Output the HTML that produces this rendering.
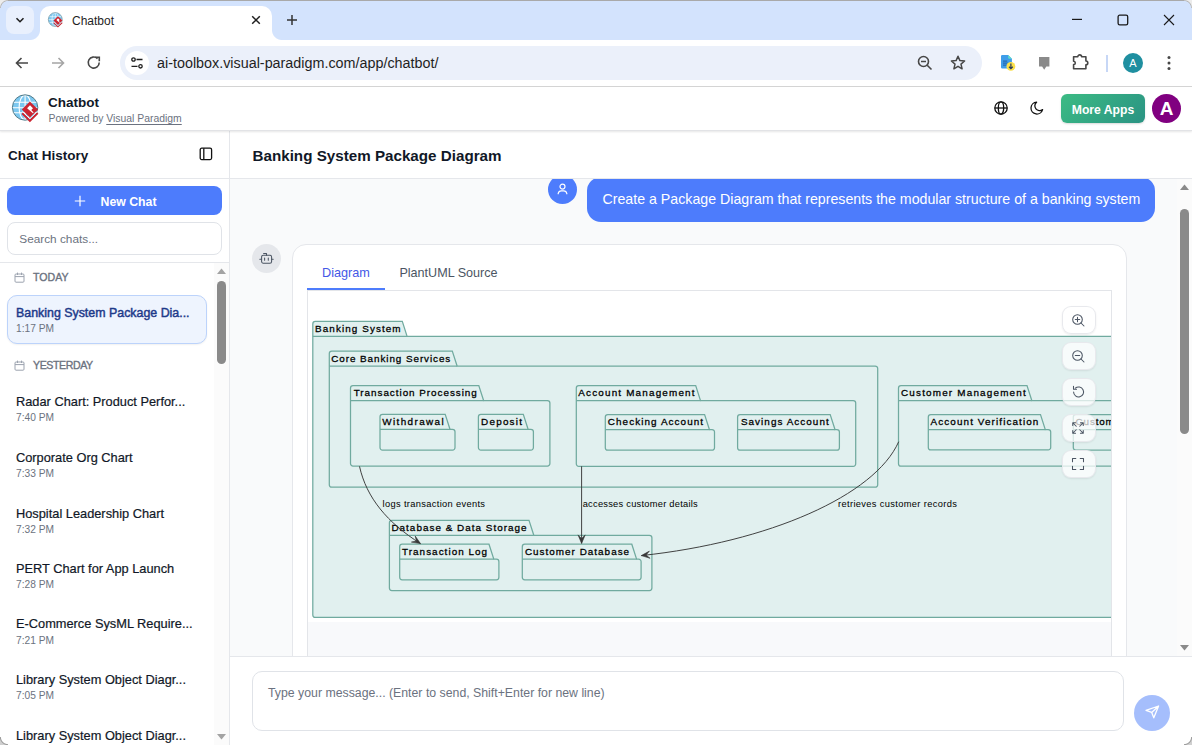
<!DOCTYPE html>
<html><head><meta charset="utf-8">
<style>
*{box-sizing:border-box;margin:0;padding:0}
html,body{width:1192px;height:745px;overflow:hidden;background:#fff;font-family:"Liberation Sans",sans-serif;position:relative}
.a{position:absolute}
svg{display:block}
/* chrome */
#strip{left:0;top:0;width:1192px;height:40px;background:#d3e3fd;border-top:1px solid #a9a9a9}
#tab{left:40px;top:6px;width:232px;height:34px;background:#fff;border-radius:10px 10px 0 0}
#toolbar{left:0;top:40px;width:1192px;height:47px;background:#fff;border-bottom:1px solid #d5d5d5}
#omni{left:120px;top:46px;width:862px;height:34px;border-radius:17px;background:#ebf0fa}
#siteinfo{left:125px;top:51px;width:24px;height:24px;border-radius:12px;background:#fff}
.ttext{color:#1f1f1f;font-size:12px}
/* app */
#apphdr{left:0;top:87px;width:1192px;height:44px;background:#fff;border-bottom:1px solid #e2e3e6;box-shadow:0 1px 2px rgba(0,0,0,.10);z-index:2}
#sidebar{left:0;top:130px;width:230px;height:615px;background:#fff;border-right:1px solid #e5e7eb}
#main{left:230px;top:130px;width:962px;height:615px;background:#fff}
</style></head>
<body>
<!-- ============ CHROME ============ -->
<div id="strip" class="a"></div>
<div class="a" style="left:6px;top:6px;width:28px;height:28px;border-radius:8px;background:#e9f0fd"></div>
<svg class="a" style="left:14px;top:14px" width="12" height="12" viewBox="0 0 12 12"><path d="M2.5 4.2 L6 7.7 L9.5 4.2" fill="none" stroke="#1f1f1f" stroke-width="1.6"/></svg>
<div id="tab" class="a"></div>
<div class="a" style="left:30px;top:30px;width:10px;height:10px;background:radial-gradient(circle at 0 0,transparent 9.5px,#fff 10.5px)"></div>
<div class="a" style="left:272px;top:30px;width:10px;height:10px;background:radial-gradient(circle at 100% 0,transparent 9.5px,#fff 10.5px)"></div>
<!-- favicon -->
<svg class="a" style="left:46.7px;top:11px" width="17.6" height="17.6" viewBox="10 92 32 32">
<defs><clipPath id="gc2"><circle cx="25.1" cy="107.5" r="12.4"/></clipPath></defs>
<circle cx="25.1" cy="107.5" r="12.4" fill="#7cc8f0"/>
<g clip-path="url(#gc2)" stroke="#fff" stroke-width="1.1" fill="none">
<ellipse cx="25.1" cy="107.5" rx="6" ry="12.4"/><path d="M25.1 95V120M12 102.3H38M12 107.7H38M12 112.8H38"/>
</g>
<circle cx="25.1" cy="107.5" r="12.7" fill="none" stroke="#4b7888" stroke-width="1"/>
<path d="M29.9 101.4L38.1 109.5L29.9 117.6L21.8 109.5Z" fill="#cc2531"/>
<path d="M30 105.2L33 108.3L31.3 110L33.6 112.5L32.9 113.2L27.1 108.2Z" fill="#fff"/>
<path d="M22.2 113.2L29.9 120.8L37.7 113" fill="none" stroke="#cc2531" stroke-width="2"/>
<path d="M22.3 111.4L29.9 118.8L37.7 111.2" fill="none" stroke="#fff" stroke-width=".9"/>
</svg>
<div class="a ttext" style="left:72px;top:13.6px">Chatbot</div>
<svg class="a" style="left:250px;top:14px" width="12" height="12" viewBox="0 0 12 12"><path d="M2.2 2.2L9.8 9.8M9.8 2.2L2.2 9.8" stroke="#1f1f1f" stroke-width="1.5"/></svg>
<svg class="a" style="left:285px;top:13px" width="14" height="14" viewBox="0 0 14 14"><path d="M7 2V12M2 7H12" stroke="#333" stroke-width="1.5"/></svg>
<svg class="a" style="left:1070px;top:13px" width="14" height="14" viewBox="0 0 14 14"><path d="M2 6.4H12" stroke="#1a1a1a" stroke-width="1.2"/></svg>
<svg class="a" style="left:1116px;top:13px" width="14" height="14" viewBox="0 0 14 14"><rect x="2.1" y="2.2" width="9.6" height="9.6" rx="1.6" fill="none" stroke="#1a1a1a" stroke-width="1.3"/></svg>
<svg class="a" style="left:1162px;top:13px" width="14" height="14" viewBox="0 0 14 14"><path d="M2 2L12 12M12 2L2 12" stroke="#1a1a1a" stroke-width="1.1"/></svg>

<div id="toolbar" class="a"></div>
<svg class="a" style="left:13px;top:54px" width="18" height="18" viewBox="0 0 18 18"><path d="M15 9H3.5M8.5 4L3.5 9L8.5 14" fill="none" stroke="#474747" stroke-width="1.6"/></svg>
<svg class="a" style="left:49px;top:54px" width="18" height="18" viewBox="0 0 18 18"><path d="M3 9H14.5M9.5 4L14.5 9L9.5 14" fill="none" stroke="#a5a5a5" stroke-width="1.6"/></svg>
<svg class="a" style="left:85px;top:54px" width="18" height="18" viewBox="0 0 18 18"><path d="M14.2 8.5A5.5 5.5 0 1 1 12.5 4.6" fill="none" stroke="#474747" stroke-width="1.6"/><path d="M10.2 3.2H14.3V7.3" fill="none" stroke="#474747" stroke-width="1.6"/></svg>
<div id="omni" class="a"></div>
<div id="siteinfo" class="a"></div>
<svg class="a" style="left:130px;top:56px" width="14" height="14" viewBox="0 0 14 14"><circle cx="3.5" cy="3.5" r="1.7" fill="none" stroke="#1f1f1f" stroke-width="1.3"/><path d="M6.5 3.5H12.5M1.5 10.3H7.5" stroke="#1f1f1f" stroke-width="1.3"/><circle cx="10.5" cy="10.3" r="1.7" fill="none" stroke="#1f1f1f" stroke-width="1.3"/></svg>
<div class="a" style="left:157px;top:55px;font-size:14.35px;color:#1f1f1f">ai-toolbox.visual-paradigm.com/app/chatbot/</div>
<svg class="a" style="left:916px;top:54px" width="18" height="18" viewBox="0 0 18 18"><circle cx="7.5" cy="7.5" r="5" fill="none" stroke="#474747" stroke-width="1.6"/><path d="M5 7.5H10M11.2 11.2L15.5 15.5" stroke="#474747" stroke-width="1.6"/></svg>
<svg class="a" style="left:949px;top:54px" width="18" height="18" viewBox="0 0 18 18"><path d="M9 2.2L10.9 6.6L15.6 7L12 10.1L13.1 14.8L9 12.3L4.9 14.8L6 10.1L2.4 7L7.1 6.6Z" fill="none" stroke="#474747" stroke-width="1.5" stroke-linejoin="round"/></svg>
<!-- extension icons -->
<svg class="a" style="left:996px;top:52px" width="20" height="20" viewBox="996 52 20 20"><path d="M1002.3 55H1008.2L1011.9 58.7V67.3A1.3 1.3 0 0 1 1010.6 68.6H1002.3A1.3 1.3 0 0 1 1001 67.3V56.3A1.3 1.3 0 0 1 1002.3 55Z" fill="#3f9de9"/><path d="M1008.2 55L1011.9 58.7H1009.2A1 1 0 0 1 1008.2 57.7Z" fill="#5fe0c8"/><path d="M1003 61.1H1007.2M1003 63.1H1007.8M1003 65.1H1006.6" stroke="#1f5fa6" stroke-width="1"/><circle cx="1010.9" cy="66.4" r="4.4" fill="#fbe04a"/><path d="M1010.9 63.6V68.4M1009 66.8L1010.9 68.6L1012.8 66.8" fill="none" stroke="#2a3a5a" stroke-width="1.2"/></svg>
<svg class="a" style="left:1034px;top:52px" width="20" height="20" viewBox="1034 52 20 20"><path d="M1039 57.1H1049.4V66.4H1046.3L1044.2 69.7L1042.1 66.4H1039Z" fill="#8a8a8a"/></svg>
<svg class="a" style="left:1070px;top:52px" width="20" height="20" viewBox="1070 52 20 20"><path d="M1073.6 56.8H1077.8A1.9 1.9 0 0 1 1081.6 56.8H1085.9V61A1.9 1.9 0 0 1 1085.9 64.8V68.8H1073.6V64.6A1.7 1.7 0 0 0 1073.6 61.2Z" fill="none" stroke="#474747" stroke-width="1.6" stroke-linejoin="round"/></svg>
<div class="a" style="left:1106px;top:55px;width:2px;height:17px;background:#c7d7f6"></div>
<div class="a" style="left:1123px;top:53px;width:20px;height:20px;border-radius:10px;background:#1f8fa0;color:#fff;font-size:11px;text-align:center;line-height:20px">A</div>
<svg class="a" style="left:1160px;top:54px" width="18" height="18" viewBox="0 0 18 18"><circle cx="9" cy="3.5" r="1.5" fill="#474747"/><circle cx="9" cy="9" r="1.5" fill="#474747"/><circle cx="9" cy="14.5" r="1.5" fill="#474747"/></svg>

<!-- ============ APP HEADER ============ -->
<div id="apphdr" class="a"></div>
<svg class="a" style="left:10px;top:92px;z-index:3" width="32" height="32" viewBox="10 92 32 32">
<defs><clipPath id="gc"><circle cx="25.1" cy="107.5" r="12.4"/></clipPath></defs>
<circle cx="25.1" cy="107.5" r="12.4" fill="#7cc8f0"/>
<g clip-path="url(#gc)" stroke="#fff" stroke-width="1.1" fill="none">
<ellipse cx="25.1" cy="107.5" rx="6" ry="12.4"/><path d="M25.1 95V120M12 102.3H38M12 107.7H38M12 112.8H38"/>
</g>
<circle cx="25.1" cy="107.5" r="12.7" fill="none" stroke="#4b7888" stroke-width="1"/>
<path d="M29.9 101.4L38.1 109.5L29.9 117.6L21.8 109.5Z" fill="#cc2531"/>
<path d="M30 105.2L33 108.3L31.3 110L33.6 112.5L32.9 113.2L27.1 108.2Z" fill="#fff"/>
<path d="M22.2 113.2L29.9 120.8L37.7 113" fill="none" stroke="#cc2531" stroke-width="2"/>
<path d="M22.3 111.4L29.9 118.8L37.7 111.2" fill="none" stroke="#fff" stroke-width=".9"/>
</svg>
<div class="a" style="left:48px;top:96.2px;font-size:13.5px;line-height:13.5px;font-weight:700;color:#111827;z-index:3">Chatbot</div>
<div class="a" style="left:48.5px;top:114.3px;font-size:10.4px;line-height:10.4px;color:#6b7280;z-index:3">Powered by <span style="text-decoration:underline;text-underline-offset:1.5px">Visual Paradigm</span></div>
<svg class="a" style="left:992px;top:99px;z-index:3" width="18" height="18" viewBox="0 0 18 18"><g fill="none" stroke="#111" stroke-width="1.3"><circle cx="9" cy="9" r="6.2"/><ellipse cx="9" cy="9" rx="2.7" ry="6.2"/><path d="M2.8 9H15.2"/></g></svg>
<svg class="a" style="left:1028px;top:99px;z-index:3" width="18" height="18" viewBox="0 0 18 18"><path d="M8.6 3.2A5.9 5.9 0 1 0 14.6 10.6A4.6 4.6 0 0 1 8.6 3.2Z" fill="none" stroke="#111" stroke-width="1.3" stroke-linejoin="round"/></svg>
<div class="a" style="left:1061px;top:94px;width:84px;height:29px;border-radius:6px;background:linear-gradient(135deg,#3cbb84,#2a9383);box-shadow:0 1px 2px rgba(0,0,0,.15);z-index:3;color:#fff;font-weight:700;font-size:12.2px;line-height:29px;padding-top:2px;text-align:center">More Apps</div>
<div class="a" style="left:1152px;top:94px;width:29px;height:29px;border-radius:15px;background:#800080;z-index:3;color:#fff;font-weight:700;font-size:19px;line-height:30px;text-align:center">A</div>

<!-- ============ SIDEBAR ============ -->
<div id="sidebar" class="a"></div>
<div class="a" style="left:8px;top:148.5px;font-size:13.5px;line-height:13.5px;font-weight:700;color:#111827">Chat History</div>
<svg class="a" style="left:199px;top:146px" width="14" height="16" viewBox="0 0 14 16"><rect x="1.2" y="2.2" width="11.4" height="11.4" rx="1.5" fill="none" stroke="#111" stroke-width="1.3"/><path d="M4.8 2.2V13.6" stroke="#111" stroke-width="1.3"/></svg>
<div class="a" style="left:0;top:178px;width:229px;height:1px;background:#e5e7eb"></div>
<div class="a" style="left:7px;top:186px;width:215px;height:29px;border-radius:8px;background:#4d7cfc"></div>
<svg class="a" style="left:74px;top:195px" width="12" height="12" viewBox="0 0 12 12"><path d="M6 .8V11.2M.8 6H11.2" stroke="#fff" stroke-width="1.2"/></svg>
<div class="a" style="left:100.5px;top:195.5px;font-size:12.3px;line-height:12.3px;font-weight:700;color:#fff">New Chat</div>
<div class="a" style="left:7px;top:222px;width:215px;height:33px;border-radius:8px;border:1px solid #e0e3e8;background:#fff"></div>
<div class="a" style="left:19.3px;top:233.5px;font-size:11.8px;line-height:11.8px;color:#6b7280">Search chats...</div>
<div class="a" style="left:0;top:262px;width:229px;height:1px;background:#e5e7eb"></div>
<!-- list -->
<div class="a" style="left:214px;top:263px;width:15px;height:482px;background:#fbfbfb"></div>
<svg class="a" style="left:216px;top:267px" width="11" height="8" viewBox="0 0 11 8"><path d="M1 7H10L5.5 1.5Z" fill="#a3a3a3"/></svg>
<div class="a" style="left:217px;top:281px;width:9px;height:83px;border-radius:4.5px;background:#8a8a8a"></div>
<svg class="a" style="left:216px;top:733px" width="11" height="8" viewBox="0 0 11 8"><path d="M1 1H10L5.5 6.5Z" fill="#a3a3a3"/></svg>

<svg class="a" style="left:14px;top:272px" width="11" height="11" viewBox="0 0 11 11"><rect x="1" y="2" width="9" height="8.2" rx="1" fill="none" stroke="#9ca3af" stroke-width="1"/><path d="M1 4.6H10M3.5 .6V3M7.5 .6V3" stroke="#9ca3af" stroke-width="1"/></svg>
<div class="a" style="left:33px;top:272.1px;font-size:10.6px;line-height:10.6px;color:#6b7280;-webkit-text-stroke:.35px #6b7280">TODAY</div>
<div class="a" style="left:7px;top:295px;width:200px;height:49px;border-radius:10px;border:1px solid #bcd3fb;background:#eef4fe;box-shadow:0 1px 2px rgba(0,0,0,.06)"></div>
<div class="a" style="left:16px;top:306.6px;font-size:12.4px;line-height:12.4px;color:#1e3a8a;-webkit-text-stroke:.45px #1e3a8a">Banking System Package Dia...</div>
<div class="a" style="left:16px;top:323.7px;font-size:10.2px;line-height:10.2px;color:#6b7280">1:17 PM</div>
<svg class="a" style="left:14px;top:360px" width="11" height="11" viewBox="0 0 11 11"><rect x="1" y="2" width="9" height="8.2" rx="1" fill="none" stroke="#9ca3af" stroke-width="1"/><path d="M1 4.6H10M3.5 .6V3M7.5 .6V3" stroke="#9ca3af" stroke-width="1"/></svg>
<div class="a" style="left:33px;top:360px;font-size:10.6px;line-height:10.6px;color:#6b7280;letter-spacing:-0.4px;-webkit-text-stroke:.35px #6b7280">YESTERDAY</div>
<div class="a" style="left:16px;top:396.0px;font-size:12.8px;line-height:12.8px;color:#111827;-webkit-text-stroke:.2px #111827">Radar Chart: Product Perfor...</div>
<div class="a" style="left:16px;top:413.1px;font-size:10.2px;line-height:10.2px;color:#6b7280">7:40 PM</div>
<div class="a" style="left:16px;top:452.1px;font-size:12.8px;line-height:12.8px;color:#111827;-webkit-text-stroke:.2px #111827">Corporate Org Chart</div>
<div class="a" style="left:16px;top:469.2px;font-size:10.2px;line-height:10.2px;color:#6b7280">7:33 PM</div>
<div class="a" style="left:16px;top:508.1px;font-size:12.8px;line-height:12.8px;color:#111827;-webkit-text-stroke:.2px #111827">Hospital Leadership Chart</div>
<div class="a" style="left:16px;top:525.2px;font-size:10.2px;line-height:10.2px;color:#6b7280">7:32 PM</div>
<div class="a" style="left:16px;top:562.8px;font-size:12.8px;line-height:12.8px;color:#111827;-webkit-text-stroke:.2px #111827">PERT Chart for App Launch</div>
<div class="a" style="left:16px;top:579.9px;font-size:10.2px;line-height:10.2px;color:#6b7280">7:28 PM</div>
<div class="a" style="left:16px;top:618.4px;font-size:12.8px;line-height:12.8px;color:#111827;-webkit-text-stroke:.2px #111827">E-Commerce SysML Require...</div>
<div class="a" style="left:16px;top:635.5px;font-size:10.2px;line-height:10.2px;color:#6b7280">7:21 PM</div>
<div class="a" style="left:16px;top:674.3px;font-size:12.8px;line-height:12.8px;color:#111827;-webkit-text-stroke:.2px #111827">Library System Object Diagr...</div>
<div class="a" style="left:16px;top:691.4px;font-size:10.2px;line-height:10.2px;color:#6b7280">7:05 PM</div>
<div class="a" style="left:16px;top:730.2px;font-size:12.8px;line-height:12.8px;color:#111827;-webkit-text-stroke:.2px #111827">Library System Object Diagr...</div>
<div class="a" style="left:16px;top:747.3px;font-size:10.2px;line-height:10.2px;color:#6b7280">7:01 PM</div>

<!-- ============ MAIN ============ -->
<div id="main" class="a"></div>
<div class="a" style="left:252.5px;top:147.7px;font-size:15.2px;line-height:15.2px;font-weight:700;color:#111827">Banking System Package Diagram</div>
<div class="a" style="left:230px;top:178px;width:962px;height:1px;background:#e5e7eb"></div>
<div class="a" style="left:230px;top:179px;width:962px;height:477px;overflow:hidden;background:#f9fafb">
<div class="a" style="left:-230px;top:-179px;width:1192px;height:745px">
 <!-- scrollbar -->
 <div class="a" style="left:1177px;top:179px;width:15px;height:477px;background:#fbfbfb"></div>
 <svg class="a" style="left:1179px;top:183px" width="11" height="8" viewBox="0 0 11 8"><path d="M1 7H10L5.5 1.5Z" fill="#8a8a8a"/></svg>
 <div class="a" style="left:1180px;top:209px;width:9px;height:225px;border-radius:4.5px;background:#8a8a8a"></div>
 <svg class="a" style="left:1179px;top:644px" width="11" height="8" viewBox="0 0 11 8"><path d="M1 1H10L5.5 6.5Z" fill="#8a8a8a"/></svg>
 <!-- user msg -->
 <div class="a" style="left:548px;top:175px;width:29px;height:29px;border-radius:50%;background:#4d7cfc"></div>
 <svg class="a" style="left:555px;top:182px" width="15" height="15" viewBox="0 0 15 15"><circle cx="7.5" cy="4.6" r="2.5" fill="none" stroke="#fff" stroke-width="1.2"/><path d="M3.2 12.3V11.3A3.2 3.2 0 0 1 6.4 8.8H8.6A3.2 3.2 0 0 1 11.8 11.3V12.3" fill="none" stroke="#fff" stroke-width="1.2"/></svg>
 <div class="a" style="left:587px;top:177px;width:568px;height:45px;border-radius:14px;background:#4d7cfc"></div>
 <div class="a" style="left:602.5px;top:191.7px;font-size:14.2px;line-height:14.2px;color:#fff">Create a Package Diagram that represents the modular structure of a banking system</div>
 <!-- bot avatar -->
 <div class="a" style="left:252px;top:244px;width:29px;height:29px;border-radius:50%;background:#e5e7eb"></div>
 <svg class="a" style="left:259px;top:251px" width="15" height="15" viewBox="0 0 15 15"><g fill="none" stroke="#4b5563" stroke-width="1.05" stroke-linecap="round" stroke-linejoin="round"><rect x="2.6" y="4.2" width="10" height="8" rx="1.7"/><path d="M4.6 2.5H7.5V4.2M0.8 8.3H2.6M12.6 8.3H14.2M5.6 7V9.3M9.3 7V9.3"/></g></svg>
 <!-- card -->
 <div class="a" style="left:292px;top:244px;width:835px;height:500px;border-radius:14px;border:1px solid #e5e7eb;background:#fff"></div>
 <div class="a" style="left:322px;top:267px;font-size:12.7px;line-height:12.7px;color:#4458e6">Diagram</div>
 <div class="a" style="left:399.4px;top:266.8px;font-size:12.6px;line-height:12.6px;color:#4b5563">PlantUML Source</div>
 <div class="a" style="left:307px;top:288px;width:78px;height:1.6px;background:#4d7cfc"></div>
 <div class="a" style="left:307px;top:289.6px;width:804.5px;height:400px;border:1.5px solid #e3e5e9;background:#f8f9fb"></div>
 <div id="diag" class="a" style="left:308px;top:291px;width:803px;height:331px;background:#fff;overflow:hidden"><svg class="a" style="left:0;top:0" width="803" height="331" viewBox="308 291 803 331" font-family="Liberation Sans" fill="#000"><path d="M312.8,323.9 A2.5,2.5 0 0 1 315.3,321.4 L402.3,321.4 L407.1,336.4 L1397.5,336.4 A2.5,2.5 0 0 1 1400.0,338.9 L1400.0,614.9 A2.5,2.5 0 0 1 1397.5,617.4 L315.3,617.4 A2.5,2.5 0 0 1 312.8,614.9 Z" fill="#e1f0ef" stroke="#70aa9f" stroke-width="1.25"/><path d="M312.8,336.4 L407.1,336.4" stroke="#70aa9f" stroke-width="1.25"/><text x="315.1" y="332.2" font-size="9.9" stroke="#000" stroke-width="0.28" textLength="85.5" lengthAdjust="spacing">Banking System</text><path d="M329.3,353.5 A2.5,2.5 0 0 1 331.8,351.0 L452.3,351.0 L457.1,366.0 L875.2,366.0 A2.5,2.5 0 0 1 877.7,368.5 L877.7,484.7 A2.5,2.5 0 0 1 875.2,487.2 L331.8,487.2 A2.5,2.5 0 0 1 329.3,484.7 Z" fill="#e1f0ef" stroke="#70aa9f" stroke-width="1.25"/><path d="M329.3,366.0 L457.1,366.0" stroke="#70aa9f" stroke-width="1.25"/><text x="331.3" y="361.8" font-size="9.9" stroke="#000" stroke-width="0.28" textLength="119.0" lengthAdjust="spacing">Core Banking Services</text><path d="M350.5,388.0 A2.5,2.5 0 0 1 353.0,385.5 L478.8,385.5 L483.6,400.5 L547.4,400.5 A2.5,2.5 0 0 1 549.9,403.0 L549.9,463.5 A2.5,2.5 0 0 1 547.4,466.0 L353.0,466.0 A2.5,2.5 0 0 1 350.5,463.5 Z" fill="#e1f0ef" stroke="#70aa9f" stroke-width="1.25"/><path d="M350.5,400.5 L483.6,400.5" stroke="#70aa9f" stroke-width="1.25"/><text x="353.7" y="396.3" font-size="9.9" stroke="#000" stroke-width="0.28" textLength="123.1" lengthAdjust="spacing">Transaction Processing</text><path d="M380.0,416.8 A2.5,2.5 0 0 1 382.5,414.3 L445.2,414.3 L450.0,429.3 L452.5,429.3 A2.5,2.5 0 0 1 455.0,431.8 L455.0,447.6 A2.5,2.5 0 0 1 452.5,450.1 L382.5,450.1 A2.5,2.5 0 0 1 380.0,447.6 Z" fill="#e1f0ef" stroke="#70aa9f" stroke-width="1.25"/><path d="M380.0,429.3 L450.0,429.3" stroke="#70aa9f" stroke-width="1.25"/><text x="382.3" y="425.1" font-size="9.9" stroke="#000" stroke-width="0.28" textLength="61.3" lengthAdjust="spacing">Withdrawal</text><path d="M478.4,416.8 A2.5,2.5 0 0 1 480.9,414.3 L523.3,414.3 L528.1,429.3 L530.9,429.3 A2.5,2.5 0 0 1 533.4,431.8 L533.4,447.6 A2.5,2.5 0 0 1 530.9,450.1 L480.9,450.1 A2.5,2.5 0 0 1 478.4,447.6 Z" fill="#e1f0ef" stroke="#70aa9f" stroke-width="1.25"/><path d="M478.4,429.3 L528.1,429.3" stroke="#70aa9f" stroke-width="1.25"/><text x="481.0" y="425.1" font-size="9.9" stroke="#000" stroke-width="0.28" textLength="41.0" lengthAdjust="spacing">Deposit</text><path d="M576.3,388.1 A2.5,2.5 0 0 1 578.8,385.6 L695.7,385.6 L700.5,400.6 L853.2,400.6 A2.5,2.5 0 0 1 855.7,403.1 L855.7,463.8 A2.5,2.5 0 0 1 853.2,466.3 L578.8,466.3 A2.5,2.5 0 0 1 576.3,463.8 Z" fill="#e1f0ef" stroke="#70aa9f" stroke-width="1.25"/><path d="M576.3,400.6 L700.5,400.6" stroke="#70aa9f" stroke-width="1.25"/><text x="578.3" y="396.4" font-size="9.9" stroke="#000" stroke-width="0.28" textLength="116.2" lengthAdjust="spacing">Account Management</text><path d="M605.3,417.0 A2.5,2.5 0 0 1 607.8,414.5 L704.6,414.5 L709.4,429.5 L712.0,429.5 A2.5,2.5 0 0 1 714.5,432.0 L714.5,447.7 A2.5,2.5 0 0 1 712.0,450.2 L607.8,450.2 A2.5,2.5 0 0 1 605.3,447.7 Z" fill="#e1f0ef" stroke="#70aa9f" stroke-width="1.25"/><path d="M605.3,429.5 L709.4,429.5" stroke="#70aa9f" stroke-width="1.25"/><text x="607.8" y="425.3" font-size="9.9" stroke="#000" stroke-width="0.28" textLength="95.3" lengthAdjust="spacing">Checking Account</text><path d="M737.6,417.0 A2.5,2.5 0 0 1 740.1,414.5 L830.2,414.5 L835.0,429.5 L836.9,429.5 A2.5,2.5 0 0 1 839.4,432.0 L839.4,447.7 A2.5,2.5 0 0 1 836.9,450.2 L740.1,450.2 A2.5,2.5 0 0 1 737.6,447.7 Z" fill="#e1f0ef" stroke="#70aa9f" stroke-width="1.25"/><path d="M737.6,429.5 L835.0,429.5" stroke="#70aa9f" stroke-width="1.25"/><text x="740.9" y="425.3" font-size="9.9" stroke="#000" stroke-width="0.28" textLength="87.8" lengthAdjust="spacing">Savings Account</text><path d="M898.5,388.0 A2.5,2.5 0 0 1 901.0,385.5 L1027.0,385.5 L1031.8,400.5 L1397.5,400.5 A2.5,2.5 0 0 1 1400.0,403.0 L1400.0,463.7 A2.5,2.5 0 0 1 1397.5,466.2 L901.0,466.2 A2.5,2.5 0 0 1 898.5,463.7 Z" fill="#e1f0ef" stroke="#70aa9f" stroke-width="1.25"/><path d="M898.5,400.5 L1031.8,400.5" stroke="#70aa9f" stroke-width="1.25"/><text x="901.0" y="396.3" font-size="9.9" stroke="#000" stroke-width="0.28" textLength="124.7" lengthAdjust="spacing">Customer Management</text><path d="M928.3,417.1 A2.5,2.5 0 0 1 930.8,414.6 L1040.5,414.6 L1045.3,429.6 L1048.2,429.6 A2.5,2.5 0 0 1 1050.7,432.1 L1050.7,447.4 A2.5,2.5 0 0 1 1048.2,449.9 L930.8,449.9 A2.5,2.5 0 0 1 928.3,447.4 Z" fill="#e1f0ef" stroke="#70aa9f" stroke-width="1.25"/><path d="M928.3,429.6 L1045.3,429.6" stroke="#70aa9f" stroke-width="1.25"/><text x="930.6" y="425.4" font-size="9.9" stroke="#000" stroke-width="0.28" textLength="107.7" lengthAdjust="spacing">Account Verification</text><path d="M1073.3,417.1 A2.5,2.5 0 0 1 1075.8,414.6 L1170.0,414.6 L1174.8,429.6 L1397.5,429.6 A2.5,2.5 0 0 1 1400.0,432.1 L1400.0,447.5 A2.5,2.5 0 0 1 1397.5,450.0 L1075.8,450.0 A2.5,2.5 0 0 1 1073.3,447.5 Z" fill="#e1f0ef" stroke="#70aa9f" stroke-width="1.25"/><path d="M1073.3,429.6 L1174.8,429.6" stroke="#70aa9f" stroke-width="1.25"/><text x="1075.6" y="425.4" font-size="9.9" stroke="#000" stroke-width="0.28" textLength="91.7" lengthAdjust="spacing">Customer Profiles</text><path d="M389.4,522.8 A2.5,2.5 0 0 1 391.9,520.3 L529.0,520.3 L533.8,535.3 L649.4,535.3 A2.5,2.5 0 0 1 651.9,537.8 L651.9,588.1 A2.5,2.5 0 0 1 649.4,590.6 L391.9,590.6 A2.5,2.5 0 0 1 389.4,588.1 Z" fill="#e1f0ef" stroke="#70aa9f" stroke-width="1.25"/><path d="M389.4,535.3 L533.8,535.3" stroke="#70aa9f" stroke-width="1.25"/><text x="391.4" y="531.1" font-size="9.9" stroke="#000" stroke-width="0.28" textLength="135.2" lengthAdjust="spacing">Database &amp; Data Storage</text><path d="M399.7,546.7 A2.5,2.5 0 0 1 402.2,544.2 L489.0,544.2 L493.8,559.2 L496.4,559.2 A2.5,2.5 0 0 1 498.9,561.7 L498.9,577.3 A2.5,2.5 0 0 1 496.4,579.8 L402.2,579.8 A2.5,2.5 0 0 1 399.7,577.3 Z" fill="#e1f0ef" stroke="#70aa9f" stroke-width="1.25"/><path d="M399.7,559.2 L493.8,559.2" stroke="#70aa9f" stroke-width="1.25"/><text x="402.0" y="555.0" font-size="9.9" stroke="#000" stroke-width="0.28" textLength="85.1" lengthAdjust="spacing">Transaction Log</text><path d="M522.3,546.7 A2.5,2.5 0 0 1 524.8,544.2 L631.8,544.2 L636.6,559.2 L638.6,559.2 A2.5,2.5 0 0 1 641.1,561.7 L641.1,577.3 A2.5,2.5 0 0 1 638.6,579.8 L524.8,579.8 A2.5,2.5 0 0 1 522.3,577.3 Z" fill="#e1f0ef" stroke="#70aa9f" stroke-width="1.25"/><path d="M522.3,559.2 L636.6,559.2" stroke="#70aa9f" stroke-width="1.25"/><text x="524.9" y="555.0" font-size="9.9" stroke="#000" stroke-width="0.28" textLength="104.2" lengthAdjust="spacing">Customer Database</text><path d="M359.5,466.4 C366.6,498 387.3,522.6 420.5,543.6" fill="none" stroke="#383838" stroke-width="0.95"/><path d="M420.5,543.6 L411.4,542.1 L416.4,541.0 L415.2,536.0 Z" fill="#383838" stroke="#383838" stroke-width="0.6"/><path d="M581.6,466.3 L581.6,543.4" fill="none" stroke="#383838" stroke-width="0.95"/><path d="M581.6,543.4 L578.0,534.9 L581.6,538.6 L585.2,534.9 Z" fill="#383838" stroke="#383838" stroke-width="0.6"/><path d="M898.7,441.7 C874.7,495.7 769,542 641.3,555.6" fill="none" stroke="#383838" stroke-width="0.95"/><path d="M641.3,555.6 L649.4,551.1 L646.1,555.1 L650.1,558.3 Z" fill="#383838" stroke="#383838" stroke-width="0.6"/><text x="382.6" y="507.1" font-size="9.3" textLength="102.4" lengthAdjust="spacing">logs transaction events</text><text x="582.7" y="507.1" font-size="9.3" textLength="115.0" lengthAdjust="spacing">accesses customer details</text><text x="838.1" y="506.8" font-size="9.3" textLength="118.7" lengthAdjust="spacing">retrieves customer records</text></svg></div>
<!--CTRL-->
 <div class="a" style="left:1061.5px;top:306px;width:34px;height:27.5px;border-radius:9px;background:rgba(255,255,255,.72);border:1px solid rgba(229,231,235,.9);box-shadow:0 1px 2px rgba(0,0,0,.08)"></div>
 <svg class="a" style="left:1071px;top:312.5px" width="14" height="14" viewBox="0 0 14 14"><g fill="none" stroke="#4b5563" stroke-width="1.05" stroke-linecap="round" stroke-linejoin="round"><circle cx="6.5" cy="6.5" r="4.8"/><path d="M6.5 4.3V8.7M4.3 6.5H8.7M10 10L13 13"/></g></svg>
 <div class="a" style="left:1061.5px;top:342px;width:34px;height:27.5px;border-radius:9px;background:rgba(255,255,255,.72);border:1px solid rgba(229,231,235,.9);box-shadow:0 1px 2px rgba(0,0,0,.08)"></div>
 <svg class="a" style="left:1071px;top:348.5px" width="14" height="14" viewBox="0 0 14 14"><g fill="none" stroke="#4b5563" stroke-width="1.05" stroke-linecap="round" stroke-linejoin="round"><circle cx="6.5" cy="6.5" r="4.8"/><path d="M4.3 6.5H8.7M10 10L13 13"/></g></svg>
 <div class="a" style="left:1061.5px;top:378px;width:34px;height:27.5px;border-radius:9px;background:rgba(255,255,255,.72);border:1px solid rgba(229,231,235,.9);box-shadow:0 1px 2px rgba(0,0,0,.08)"></div>
 <svg class="a" style="left:1071px;top:384.5px" width="14" height="14" viewBox="0 0 14 14"><g fill="none" stroke="#4b5563" stroke-width="1.05" stroke-linecap="round" stroke-linejoin="round"><path d="M2.6 7A5 5 0 1 0 4.3 3.2"/><path d="M2.5 1.2V4.2H5.5"/></g></svg>
 <div class="a" style="left:1061.5px;top:414px;width:34px;height:27.5px;border-radius:9px;background:rgba(255,255,255,.72);border:1px solid rgba(229,231,235,.9);box-shadow:0 1px 2px rgba(0,0,0,.08)"></div>
 <svg class="a" style="left:1071px;top:420.5px" width="14" height="14" viewBox="0 0 24 24"><g fill="none" stroke="#4b5563" stroke-width="1.8" stroke-linecap="round" stroke-linejoin="round"><path d="M21 21l-6-6m6 6v-4.8m0 4.8h-4.8M3 16.2V21m0 0h4.8M3 21l6-6M21 7.8V3m0 0h-4.8M21 3l-6 6M3 7.8V3m0 0h4.8M3 3l6 6"/></g></svg>
 <div class="a" style="left:1061.5px;top:450px;width:34px;height:27.5px;border-radius:9px;background:rgba(255,255,255,.72);border:1px solid rgba(229,231,235,.9);box-shadow:0 1px 2px rgba(0,0,0,.08)"></div>
 <svg class="a" style="left:1071px;top:456.5px" width="14" height="14" viewBox="0 0 14 14"><g fill="none" stroke="#4b5563" stroke-width="1.05" stroke-linecap="round" stroke-linejoin="round"><path d="M1.5 4.8V1.5H4.8M9.2 1.5H12.5V4.8M12.5 9.2V12.5H9.2M4.8 12.5H1.5V9.2"/></g></svg>
<!--/CTRL-->
</div>
</div>
<div class="a" style="left:230px;top:656px;width:962px;height:1px;background:#e5e7eb"></div>
<div class="a" style="left:252px;top:671px;width:872px;height:60px;border-radius:10px;border:1px solid #e0e3e8;background:#fff"></div>
<div class="a" style="left:268px;top:686.7px;font-size:12.3px;line-height:12.3px;color:#6b7280">Type your message... (Enter to send, Shift+Enter for new line)</div>
<div class="a" style="left:1134px;top:695px;width:36px;height:36px;border-radius:50%;background:#a5befc"></div>
<svg class="a" style="left:1143px;top:704px" width="18" height="18" viewBox="0 0 18 18"><path d="M15.6 2L3 6.4L8.7 8.4L10.8 13.8Z M15.6 2L8.7 8.4" fill="none" stroke="#fff" stroke-width="1.3" stroke-linejoin="round"/></svg>
<!-- window corners -->
<div class="a" style="left:0;top:0;width:8px;height:8px;z-index:9;background:radial-gradient(circle at 100% 100%,transparent 6.6px,#b8b8b8 7.4px,#ececec 8.4px)"></div>
<div class="a" style="left:1184px;top:0;width:8px;height:8px;z-index:9;background:radial-gradient(circle at 0 100%,transparent 6.6px,#b8b8b8 7.4px,#ececec 8.4px)"></div>
<div class="a" style="left:0;top:737px;width:8px;height:8px;z-index:9;background:radial-gradient(circle at 100% 0,transparent 6.6px,#9a9a9a 7.6px,#d0d0d0 8.6px)"></div>
<div class="a" style="left:1184px;top:737px;width:8px;height:8px;z-index:9;background:radial-gradient(circle at 0 0,transparent 6.6px,#9a9a9a 7.6px,#d0d0d0 8.6px)"></div>
</body></html>
